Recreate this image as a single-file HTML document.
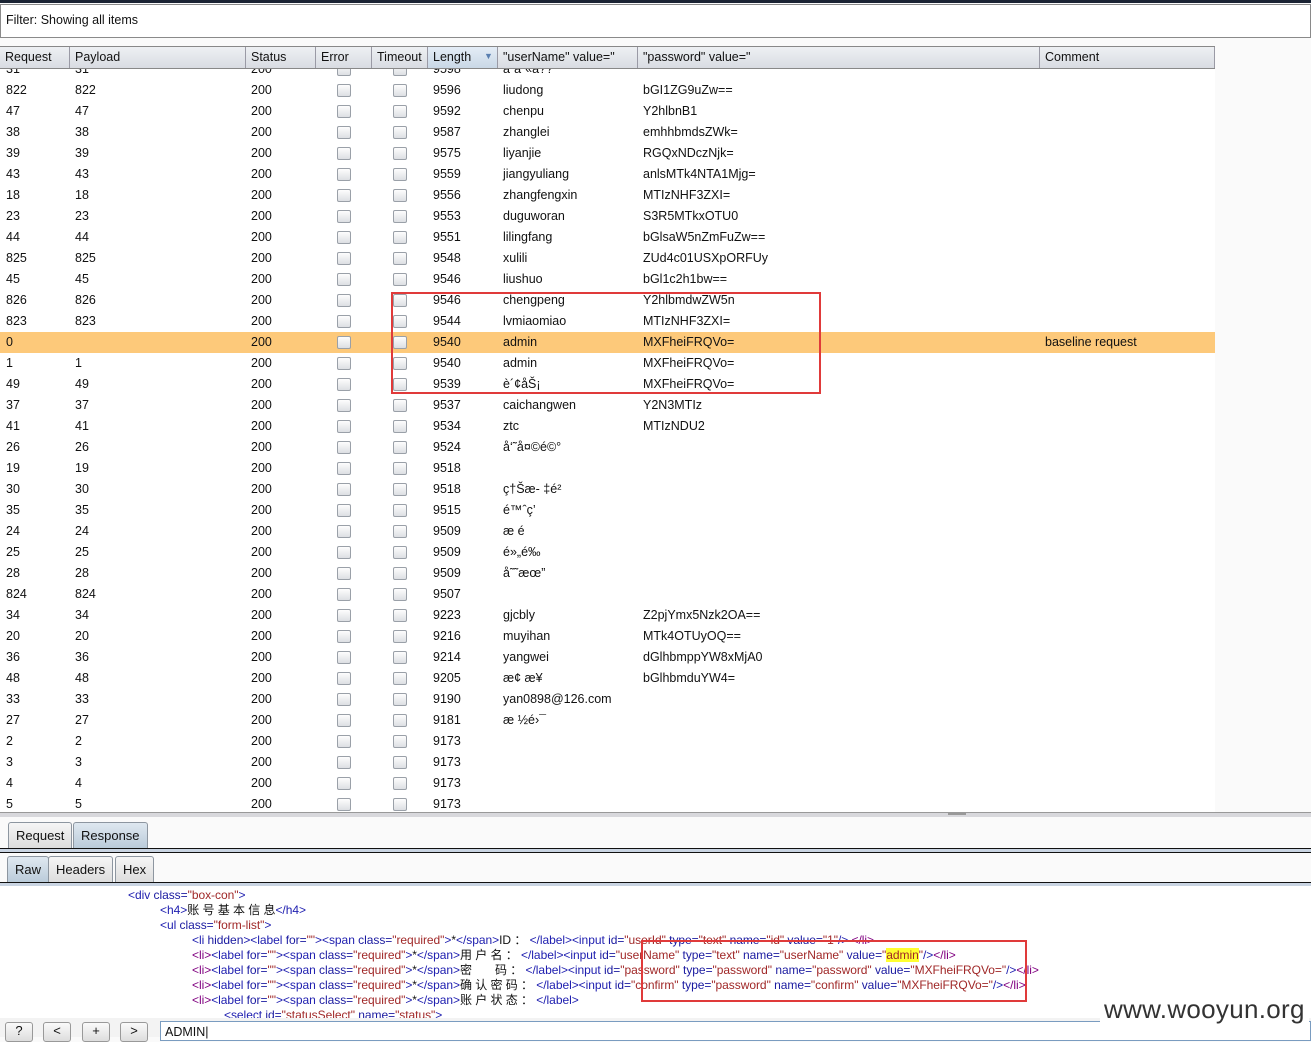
<!DOCTYPE html>
<html><head><meta charset="utf-8">
<style>
*{margin:0;padding:0;box-sizing:border-box}
body{width:1311px;height:1037px;overflow:hidden;background:#fafafa;font-family:"Liberation Sans","Noto Sans CJK SC",sans-serif;font-size:12.5px;color:#111;position:relative}
.a{position:absolute;white-space:nowrap}
.filter{left:0;top:4px;width:1311px;height:34px;border:1px solid #8a8a8a;background:#fff;padding:8px 5px;font-size:12.5px}
.topline{left:0;top:0;width:1311px;height:3px;background:#1a2333}
.hdr{top:46px;height:23px;left:0;width:1215px;background:linear-gradient(#eef0f3,#d9dce2);border-top:1px solid #888;border-bottom:1px solid #888}
.hc{top:0;height:21px;padding:3px 5px;border-right:1px solid #9a9aa5}
.tbl{left:0;top:69px;width:1215px;height:743px;background:#fff;overflow:hidden}
.row{position:absolute;left:0;width:1215px;height:21px}
.row span{position:absolute;top:3px}
.cb{position:absolute;top:4px;width:14px;height:13px;border:1px solid #9aa0a8;border-radius:2px;background:linear-gradient(#fdfdfd,#dcdfe3)}
.hl{background:#fdc97a}
.red{border:2px solid #e03a3a}
.tab{border:1px solid #8d96a0;border-bottom:none;border-radius:3px 3px 0 0;background:linear-gradient(#f6f6f6,#dcdcdc);padding:5px 7px;font-size:13px}
.tab.sel{background:linear-gradient(#dfe8f0,#b9cad9)}
.code{left:0;top:886px;width:1311px;height:132px;background:#fff;font-family:"Liberation Sans Narrow","Liberation Sans","Noto Sans CJK SC",sans-serif;font-size:12px;line-height:15px;letter-spacing:-0.04px}
.t{color:#2020b0}.n{color:#1a1aa0}.v{color:#a02828}.k{color:#800080}
.btn{top:1022px;height:20px;width:28px;border:1px solid #999;border-radius:3px;background:linear-gradient(#fafafa,#ddd);text-align:center;font-size:13px}
</style></head><body>
<div class="a topline"></div>
<div class="a filter">Filter: Showing all items</div>
<div class="a hdr">
<div class="a hc" style="left:0;width:70px">Request</div>
<div class="a hc" style="left:70px;width:176px">Payload</div>
<div class="a hc" style="left:246px;width:70px">Status</div>
<div class="a hc" style="left:316px;width:56px">Error</div>
<div class="a hc" style="left:372px;width:56px">Timeout</div>
<div class="a hc" style="left:428px;width:70px;background:linear-gradient(#e4edf6,#c9d8e6)">Length<span style="position:absolute;left:56px;top:4px;font-size:9px;color:#5a7fb0">▼</span></div>
<div class="a hc" style="left:498px;width:140px">"userName" value="</div>
<div class="a hc" style="left:638px;width:402px">"password" value="</div>
<div class="a hc" style="left:1040px;width:175px">Comment</div>
</div>
<div class="a tbl" id="tb">
<div class="row" style="top:-10px"><span style="left:6px">31</span><span style="left:75px">31</span><span style="left:251px">200</span><div class="cb" style="left:337px"></div><div class="cb" style="left:393px"></div><span style="left:433px">9598</span><span style="left:503px">â¨â¨«â??</span></div>
</div>
<div class="a" style="left:0;top:812px;width:1311px;height:5px;background:#d8d8dc;border-top:1px solid #999"></div>
<div class="a" style="left:948px;top:813px;width:18px;height:2px;background:#999"></div>
<div class="a tab" style="left:8px;top:822px;height:27px">Request</div>
<div class="a tab sel" style="left:73px;top:822px;height:27px">Response</div>
<div class="a" style="left:0;top:848px;width:1311px;height:5px;border-top:1px solid #111;border-bottom:1px solid #111;background:#c9d4e2"></div>
<div class="a tab sel" style="left:7px;top:856px;height:27px">Raw</div>
<div class="a tab" style="left:48px;top:856px;height:27px">Headers</div>
<div class="a tab" style="left:115px;top:856px;height:27px">Hex</div>
<div class="a" style="left:0;top:882px;width:1311px;height:5px;border-top:1px solid #111;border-bottom:1px solid #111;background:#c9d4e2"></div>
<div class="a code">
<div class="a" style="left:128px;top:2px"><span class="t">&lt;div</span> <span class="n">class=</span><span class="v">"box-con"</span><span class="t">&gt;</span></div>
<div class="a" style="left:160px;top:17px"><span class="t">&lt;h4&gt;</span>账 号 基 本 信 息<span class="t">&lt;/h4&gt;</span></div>
<div class="a" style="left:160px;top:32px"><span class="t">&lt;ul</span> <span class="n">class=</span><span class="v">"form-list"</span><span class="t">&gt;</span></div>
<div class="a" style="left:192px;top:47px"><span class="t">&lt;li</span> <span class="n">hidden</span><span class="t">&gt;&lt;label</span> <span class="n">for=</span><span class="v">""</span><span class="t">&gt;&lt;span</span> <span class="n">class=</span><span class="v">"required"</span><span class="t">&gt;</span>*<span class="t">&lt;/span&gt;</span>ID ： <span class="t">&lt;/label&gt;&lt;input</span> <span class="n">id=</span><span class="v">"userId"</span> <span class="n">type=</span><span class="v">"text"</span> <span class="n">name=</span><span class="v">"id"</span> <span class="n">value=</span><span class="v">"1"</span><span class="t">/&gt;</span> <span class="k">&lt;/li&gt;</span></div>
<div class="a" style="left:192px;top:62px"><span class="k">&lt;li&gt;</span><span class="t">&lt;label</span> <span class="n">for=</span><span class="v">""</span><span class="t">&gt;&lt;span</span> <span class="n">class=</span><span class="v">"required"</span><span class="t">&gt;</span>*<span class="t">&lt;/span&gt;</span>用 户 名 ： <span class="t">&lt;/label&gt;&lt;input</span> <span class="n">id=</span><span class="v">"userName"</span> <span class="n">type=</span><span class="v">"text"</span> <span class="n">name=</span><span class="v">"userName"</span> <span class="n">value=</span><span class="v">"<span style="background:#ffff30;color:#a02828">admin</span>"</span><span class="t">/&gt;</span><span class="k">&lt;/li&gt;</span></div>
<div class="a" style="left:192px;top:77px"><span class="k">&lt;li&gt;</span><span class="t">&lt;label</span> <span class="n">for=</span><span class="v">""</span><span class="t">&gt;&lt;span</span> <span class="n">class=</span><span class="v">"required"</span><span class="t">&gt;</span>*<span class="t">&lt;/span&gt;</span>密 &nbsp; &nbsp; &nbsp; 码 ： <span class="t">&lt;/label&gt;&lt;input</span> <span class="n">id=</span><span class="v">"password"</span> <span class="n">type=</span><span class="v">"password"</span> <span class="n">name=</span><span class="v">"password"</span> <span class="n">value=</span><span class="v">"MXFheiFRQVo="</span><span class="t">/&gt;</span><span class="k">&lt;/li&gt;</span></div>
<div class="a" style="left:192px;top:92px"><span class="k">&lt;li&gt;</span><span class="t">&lt;label</span> <span class="n">for=</span><span class="v">""</span><span class="t">&gt;&lt;span</span> <span class="n">class=</span><span class="v">"required"</span><span class="t">&gt;</span>*<span class="t">&lt;/span&gt;</span>确 认 密 码 ： <span class="t">&lt;/label&gt;&lt;input</span> <span class="n">id=</span><span class="v">"confirm"</span> <span class="n">type=</span><span class="v">"password"</span> <span class="n">name=</span><span class="v">"confirm"</span> <span class="n">value=</span><span class="v">"MXFheiFRQVo="</span><span class="t">/&gt;</span><span class="k">&lt;/li&gt;</span></div>
<div class="a" style="left:192px;top:107px"><span class="k">&lt;li&gt;</span><span class="t">&lt;label</span> <span class="n">for=</span><span class="v">""</span><span class="t">&gt;&lt;span</span> <span class="n">class=</span><span class="v">"required"</span><span class="t">&gt;</span>*<span class="t">&lt;/span&gt;</span>账 户 状 态 ： <span class="t">&lt;/label&gt;</span></div>
<div class="a" style="left:224px;top:122px"><span class="t">&lt;select</span> <span class="n">id=</span><span class="v">"statusSelect"</span> <span class="n">name=</span><span class="v">"status"</span><span class="t">&gt;</span></div>
<div class="a red" style="left:641px;top:54px;width:386px;height:62px"></div>
</div>
<div class="a" style="left:0;top:1018px;width:1311px;height:19px;background:#f3f3f3"></div>
<div class="a btn" style="left:5px">?</div>
<div class="a btn" style="left:43px">&lt;</div>
<div class="a btn" style="left:82px">+</div>
<div class="a btn" style="left:120px">&gt;</div>
<div class="a" style="left:160px;top:1021px;width:1151px;height:20px;border:1px solid #7a9cc0;background:#fff;padding:3px 4px;font-size:12.5px">ADMIN|</div>
<div class="a" style="left:1100px;top:995px;font-size:26px;line-height:28px;color:#333;background:#fff;padding:0 4px;letter-spacing:0.3px;z-index:5">www.wooyun.org</div>
<div class="a red" style="left:391px;top:292px;width:430px;height:102px"></div>
<script>
var d=[
["822","822","9596","liudong","bGI1ZG9uZw=="],
["47","47","9592","chenpu","Y2hlbnB1"],
["38","38","9587","zhanglei","emhhbmdsZWk="],
["39","39","9575","liyanjie","RGQxNDczNjk="],
["43","43","9559","jiangyuliang","anlsMTk4NTA1Mjg="],
["18","18","9556","zhangfengxin","MTIzNHF3ZXI="],
["23","23","9553","duguworan","S3R5MTkxOTU0"],
["44","44","9551","lilingfang","bGlsaW5nZmFuZw=="],
["825","825","9548","xulili","ZUd4c01USXpORFUy"],
["45","45","9546","liushuo","bGl1c2h1bw=="],
["826","826","9546","chengpeng","Y2hlbmdwZW5n"],
["823","823","9544","lvmiaomiao","MTIzNHF3ZXI="],
["0","","9540","admin","MXFheiFRQVo=","baseline request"],
["1","1","9540","admin","MXFheiFRQVo="],
["49","49","9539","è´¢åŠ¡","MXFheiFRQVo="],
["37","37","9537","caichangwen","Y2N3MTIz"],
["41","41","9534","ztc","MTIzNDU2"],
["26","26","9524","å‘˜å¤©é©°",""],
["19","19","9518","",""],
["30","30","9518","ç†Šæ- ‡é²",""],
["35","35","9515","é™ˆç’",""],
["24","24","9509","æ   é­",""],
["25","25","9509","é»„é‰ ",""],
["28","28","9509","å˜˜æœ”",""],
["824","824","9507","",""],
["34","34","9223","gjcbly","Z2pjYmx5Nzk2OA=="],
["20","20","9216","muyihan","MTk4OTUyOQ=="],
["36","36","9214","yangwei","dGlhbmppYW8xMjA0"],
["48","48","9205","æ¢ æ¥","bGlhbmduYW4="],
["33","33","9190","yan0898@126.com",""],
["27","27","9181","æ ½é›¯",""],
["2","2","9173","",""],["3","3","9173","",""],["4","4","9173","",""],["5","5","9173","",""]];
var h="";
d.forEach(function(r,i){
h+='<div class="row'+(r[0]=="0"?' hl':'')+'" style="top:'+(11+i*21)+'px"><span style="left:6px">'+r[0]+'</span><span style="left:75px">'+r[1]+'</span><span style="left:251px">200</span><div class="cb" style="left:337px"></div><div class="cb" style="left:393px"></div><span style="left:433px">'+r[2]+'</span><span style="left:503px">'+r[3]+'</span><span style="left:643px">'+r[4]+'</span>'+(r[5]?'<span style="left:1045px">'+r[5]+'</span>':'')+'</div>';
});
document.getElementById('tb').insertAdjacentHTML('beforeend',h);
</script>
</body></html>
